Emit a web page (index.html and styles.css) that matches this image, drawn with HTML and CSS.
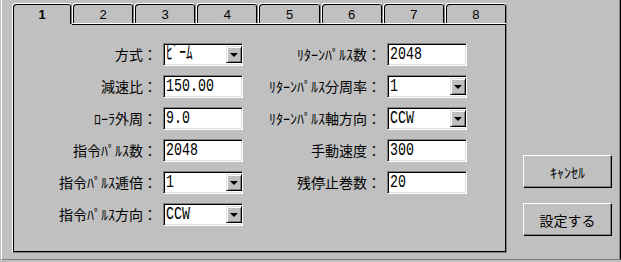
FILE: index.html
```html
<!DOCTYPE html>
<html lang="ja">
<head>
<meta charset="utf-8">
<title>設定</title>
<link rel="stylesheet" href="styles.css">
</head>
<body>
<div class="window">
  <div class="tabctl">
    <div class="tabs">
      <div class="tab active">1</div>
      <div class="tab">2</div>
      <div class="tab">3</div>
      <div class="tab">4</div>
      <div class="tab">5</div>
      <div class="tab">6</div>
      <div class="tab">7</div>
      <div class="tab">8</div>
    </div>
    <div class="panel">
      <div class="lbl">方式：</div>
      <div class="field"><span class="val">ﾋﾞｰﾑ</span><span class="drop"><i class="tri"></i></span></div>
      <div class="lbl">ﾘﾀｰﾝﾊﾟﾙｽ数：</div>
      <div class="field"><span class="val">2048</span></div>

      <div class="lbl">減速比：</div>
      <div class="field"><span class="val">150.00</span></div>
      <div class="lbl">ﾘﾀｰﾝﾊﾟﾙｽ分周率：</div>
      <div class="field"><span class="val">1</span><span class="drop"><i class="tri"></i></span></div>

      <div class="lbl">ﾛｰﾗ外周：</div>
      <div class="field"><span class="val">9.0</span></div>
      <div class="lbl">ﾘﾀｰﾝﾊﾟﾙｽ軸方向：</div>
      <div class="field"><span class="val">CCW</span><span class="drop"><i class="tri"></i></span></div>

      <div class="lbl">指令ﾊﾟﾙｽ数：</div>
      <div class="field"><span class="val">2048</span></div>
      <div class="lbl">手動速度：</div>
      <div class="field"><span class="val">300</span></div>

      <div class="lbl">指令ﾊﾟﾙｽ逓倍：</div>
      <div class="field"><span class="val">1</span><span class="drop"><i class="tri"></i></span></div>
      <div class="lbl">残停止巻数：</div>
      <div class="field"><span class="val">20</span></div>

      <div class="lbl">指令ﾊﾟﾙｽ方向：</div>
      <div class="field"><span class="val">CCW</span><span class="drop"><i class="tri"></i></span></div>
    </div>
  </div>
  <div class="side">
    <button class="btn">ｷｬﾝｾﾙ</button>
    <button class="btn">設定する</button>
  </div>
</div>
</body>
</html>
```

FILE: styles.css
```css
html, body {
  margin: 0;
  padding: 0;
  background: #c0c0c0;
}

body {
  width: 621px;
  height: 262px;
  overflow: hidden;
  font-family: "Noto Sans CJK JP", sans-serif;
  color: #000;
}

.window {
  box-sizing: border-box;
  width: 620px;
  height: 260px;
  margin-left: 1px;
  border-left: 1px solid #fff;
  border-right: 1px solid #000;
  border-bottom: 1px solid #808080;
  box-shadow: inset -1px 0 #808080;
  padding: 3px 0 0 10px;
  display: flex;
}

.tabctl {
  width: 495px;
  display: flex;
  flex-direction: column;
}

.tabs {
  display: flex;
  height: 21px;
}

.tab {
  box-sizing: border-box;
  flex: 1;
  height: 21px;
  border: 1px solid;
  border-color: #fff #808080 #fff #fff;
  border-radius: 4px 4px 0 0;
  box-shadow: inset 1px 1px #000, inset -1px 0 #000, 0 1px 0 #000;
  font: 13px "Liberation Sans", Arial, sans-serif;
  display: flex;
  align-items: center;
  justify-content: center;
  padding-top: 1px;
}

.tab.active {
  flex: 0 0 60px;
  border-bottom: none;
  box-shadow: inset 1px 1px #000, inset -1px 0 #000;
  font-weight: bold;
}

.panel {
  box-sizing: border-box;
  height: 229px;
  border: 1px solid;
  border-top: none;
  border-color: #fff #808080 #808080 #fff;
  box-shadow: inset 1px 0 #000, inset -1px -1px #000;
  padding-top: 19px;
  display: grid;
  grid-template-columns: 144px 80px 132px 80px;
  grid-auto-rows: 23px;
  column-gap: 6px;
  row-gap: 9px;
  align-content: start;
}

.lbl {
  font-size: 14px;
  line-height: 23px;
  text-align: right;
  white-space: nowrap;
}

.field {
  box-sizing: border-box;
  height: 23px;
  background: #fff;
  border: 1px solid;
  border-color: #808080 #fff #fff #808080;
  box-shadow: inset 1px 1px #000, inset -1px -1px #dfdfdf;
  padding-left: 2px;
  display: flex;
  align-items: center;
  overflow: hidden;
}

.val {
  display: inline-block;
  font-family: "Liberation Mono", "Noto Sans CJK JP", monospace;
  font-size: 19px;
  line-height: 21px;
  transform: scaleX(0.7);
  transform-origin: left center;
  white-space: nowrap;
}

.drop {
  box-sizing: border-box;
  margin-left: auto;
  width: 16px;
  height: 17px;
  background: #c0c0c0;
  border: 1px solid;
  border-color: #dfdfdf #000 #000 #dfdfdf;
  box-shadow: inset 1px 1px #fff, inset -1px -1px #808080;
  display: flex;
  align-items: center;
  justify-content: center;
}

.tri {
  width: 0;
  height: 0;
  border-left: 4px solid transparent;
  border-right: 4px solid transparent;
  border-top: 4px solid #000;
}

.side {
  margin-left: 16px;
  padding-top: 152px;
  display: flex;
  flex-direction: column;
  gap: 15px;
}

.btn {
  box-sizing: border-box;
  width: 89px;
  height: 33px;
  margin: 0;
  padding: 0;
  background: #c0c0c0;
  border: 1px solid;
  border-color: #fff #000 #000 #fff;
  box-shadow: inset -1px -1px #808080;
  font: 14px "Noto Sans CJK JP", sans-serif;
  color: #000;
  display: flex;
  align-items: center;
  justify-content: center;
}
```
